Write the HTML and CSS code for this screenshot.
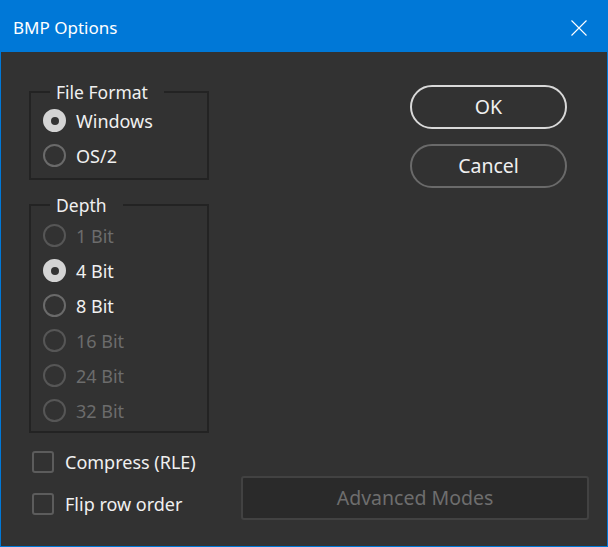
FILE: index.html
```html
<!DOCTYPE html>
<html>
<head>
<meta charset="utf-8">
<link rel="stylesheet" href="styles.css">
</head>
<body>
<div class="window">
  <div class="titlebar">
    <span class="title">BMP Options</span>
    <svg class="close" width="16" height="16" viewBox="0 0 16 16"><path d="M0.5 0.5 L15.5 15.5 M15.5 0.5 L0.5 15.5" stroke="#ffffff" stroke-width="1.1" fill="none"/></svg>
  </div>
  <div class="content">
    <div class="top">
      <div class="groups">
        <div class="group g-format">
          <span class="legend">File Format</span>
          <div class="radio on"><span class="mark"></span><span class="lbl">Windows</span></div>
          <div class="radio"><span class="mark"></span><span class="lbl">OS/2</span></div>
        </div>
        <div class="group g-depth">
          <span class="legend">Depth</span>
          <div class="radio off"><span class="mark"></span><span class="lbl">1 Bit</span></div>
          <div class="radio on"><span class="mark"></span><span class="lbl">4 Bit</span></div>
          <div class="radio"><span class="mark"></span><span class="lbl">8 Bit</span></div>
          <div class="radio off"><span class="mark"></span><span class="lbl">16 Bit</span></div>
          <div class="radio off"><span class="mark"></span><span class="lbl">24 Bit</span></div>
          <div class="radio off"><span class="mark"></span><span class="lbl">32 Bit</span></div>
        </div>
      </div>
      <div class="actions">
        <button class="btn btn-ok">OK</button>
        <button class="btn btn-cancel">Cancel</button>
      </div>
    </div>
    <div class="bottom">
      <div class="checks">
        <div class="check"><span class="box"></span><span class="lbl">Compress (RLE)</span></div>
        <div class="check"><span class="box"></span><span class="lbl">Flip row order</span></div>
      </div>
      <button class="adv">Advanced Modes</button>
    </div>
  </div>
</div>
</body>
</html>
```
FILE: styles.css
```css
* { box-sizing: border-box; }
html, body { margin: 0; padding: 0; background: #323232; }
body { font-family: "Noto Sans", "Open Sans", sans-serif; color: #f0f0f0; }

.window {
  width: 608px;
  height: 547px;
  border: 1px solid #0078d7;
  background: #323232;
  display: flex;
  flex-direction: column;
}

.titlebar {
  height: 51px;
  background: #0078d7;
  display: flex;
  align-items: center;
  padding: 2px 20px 0 12px;
  flex: none;
}
.title { font-size: 17px; color: #ffffff; flex: 1; }
.close { display: block; }

.content {
  flex: 1;
  padding: 0 18px 0 28px;
  display: flex;
  flex-direction: column;
}

.top { display: flex; justify-content: space-between; }

.groups {
  width: 180px;
  margin-top: 39px;
  display: flex;
  flex-direction: column;
  gap: 24px;
}

.group {
  position: relative;
  border: 2px solid #232323;
  padding-left: 12px;
}
.g-format { height: 89px; padding-top: 10px; }
.g-depth { height: 229px; padding-top: 12px; }

.legend {
  position: absolute;
  top: -13px;
  left: 19px;
  padding: 0 16px 0 6px;
  background: #323232;
  font-size: 17.5px;
  line-height: 24px;
  color: #f0f0f0;
}

.radio {
  height: 35px;
  display: flex;
  align-items: center;
  gap: 10px;
  font-size: 18px;
}
.radio .mark {
  width: 23px;
  height: 23px;
  border-radius: 50%;
  border: 2px solid #6a6a6a;
  flex: none;
  display: flex;
  align-items: center;
  justify-content: center;
}
.radio.on .mark { background: #d4d4d4; border-color: #d4d4d4; }
.radio.on .mark::after {
  content: "";
  width: 8px;
  height: 8px;
  border-radius: 50%;
  background: #333333;
}
.radio.off .mark { border-color: #565656; }
.radio.off .lbl { color: #6c6c6c; }

.actions {
  margin-top: 33px;
  margin-right: 22px;
  display: flex;
  flex-direction: column;
  gap: 15px;
}
.btn {
  width: 157px;
  height: 44px;
  border-radius: 22px;
  background: transparent;
  color: #f0f0f0;
  font-family: inherit;
  font-size: 19.5px;
  padding: 0 0 2px;
  cursor: pointer;
}
.btn-ok { border: 2px solid #d9d9d9; }
.btn-cancel { border: 2px solid #6a6a6a; }

.bottom {
  margin-top: 8px;
  display: flex;
  align-items: flex-end;
}
.checks { margin-left: 3px; display: flex; flex-direction: column; }
.check {
  height: 42px;
  display: flex;
  align-items: center;
  gap: 11px;
  font-size: 18px;
}
.check .box {
  width: 22px;
  height: 22px;
  border: 2px solid #5c5c5c;
  border-radius: 3px;
  flex: none;
}

.adv {
  margin-left: auto;
  margin-bottom: 5px;
  width: 348px;
  height: 44px;
  background: #2a2a2a;
  border: 2px solid #424242;
  border-radius: 3px;
  color: #6e6e6e;
  font-family: inherit;
  font-size: 19.5px;
  padding: 0 0 2px;
}
```
